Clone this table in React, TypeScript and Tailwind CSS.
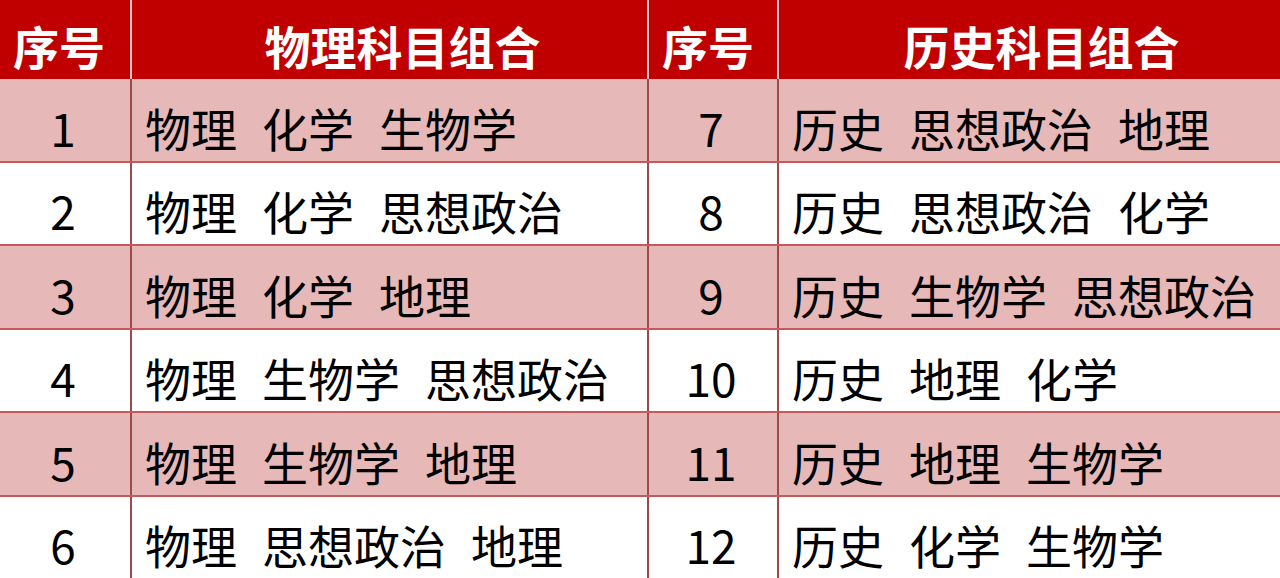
import React from "react";

const rows: [string, string[], string, string[]][] = [
  ["1", ["物理", "化学", "生物学"], "7", ["历史", "思想政治", "地理"]],
  ["2", ["物理", "化学", "思想政治"], "8", ["历史", "思想政治", "化学"]],
  ["3", ["物理", "化学", "地理"], "9", ["历史", "生物学", "思想政治"]],
  ["4", ["物理", "生物学", "思想政治"], "10", ["历史", "地理", "化学"]],
  ["5", ["物理", "生物学", "地理"], "11", ["历史", "地理", "生物学"]],
  ["6", ["物理", "思想政治", "地理"], "12", ["历史", "化学", "生物学"]],
];

const font = { fontFamily: '"Noto Sans CJK SC", "Noto Sans", sans-serif' };

function Words({ items }: { items: string[] }) {
  return (
    <div className="flex gap-[25px] whitespace-nowrap">
      {items.map((w, i) => (
        <span key={i}>{w}</span>
      ))}
    </div>
  );
}

export default function App() {
  return (
    <div className="w-[1280px] h-[578px] overflow-hidden bg-white text-black" style={font}>
      <div className="flex h-[79px] bg-[#c00000] text-white font-bold text-[46px] leading-none">
        <div className="w-[132px] shrink-0 border-r-2 border-[#f2c4c4] flex items-center justify-center pt-[10px] pr-[12px]">序号</div>
        <div className="w-[517px] shrink-0 border-r-2 border-[#f2c4c4] flex items-center justify-center pt-[10px] pl-[26px]">物理科目组合</div>
        <div className="w-[130px] shrink-0 border-r-2 border-[#f2c4c4] flex items-center justify-center pt-[10px] pr-[10px]">序号</div>
        <div className="flex-1 flex items-center justify-center pt-[10px] pl-[24px]">历史科目组合</div>
      </div>
      {rows.map((r, i) => (
        <div
          key={i}
          className={`flex h-[83.5px] border-b-2 border-[#c8585a] text-[46px] leading-none ${
            i % 2 === 0 ? "bg-[#e6b8b7]" : "bg-white"
          }`}
        >
          <div className="w-[132px] shrink-0 border-r-2 border-[#9e4a4a] flex items-center justify-center pt-[14px] pr-[4px]">{r[0]}</div>
          <div className="w-[517px] shrink-0 border-r-2 border-[#9e4a4a] flex items-center pl-[13px] pt-[14px]">
            <Words items={r[1]} />
          </div>
          <div className="w-[130px] shrink-0 border-r-2 border-[#9e4a4a] flex items-center justify-center pt-[14px] pr-[4px]">{r[2]}</div>
          <div className="flex-1 flex items-center pl-[13px] pt-[14px]">
            <Words items={r[3]} />
          </div>
        </div>
      ))}
    </div>
  );
}
